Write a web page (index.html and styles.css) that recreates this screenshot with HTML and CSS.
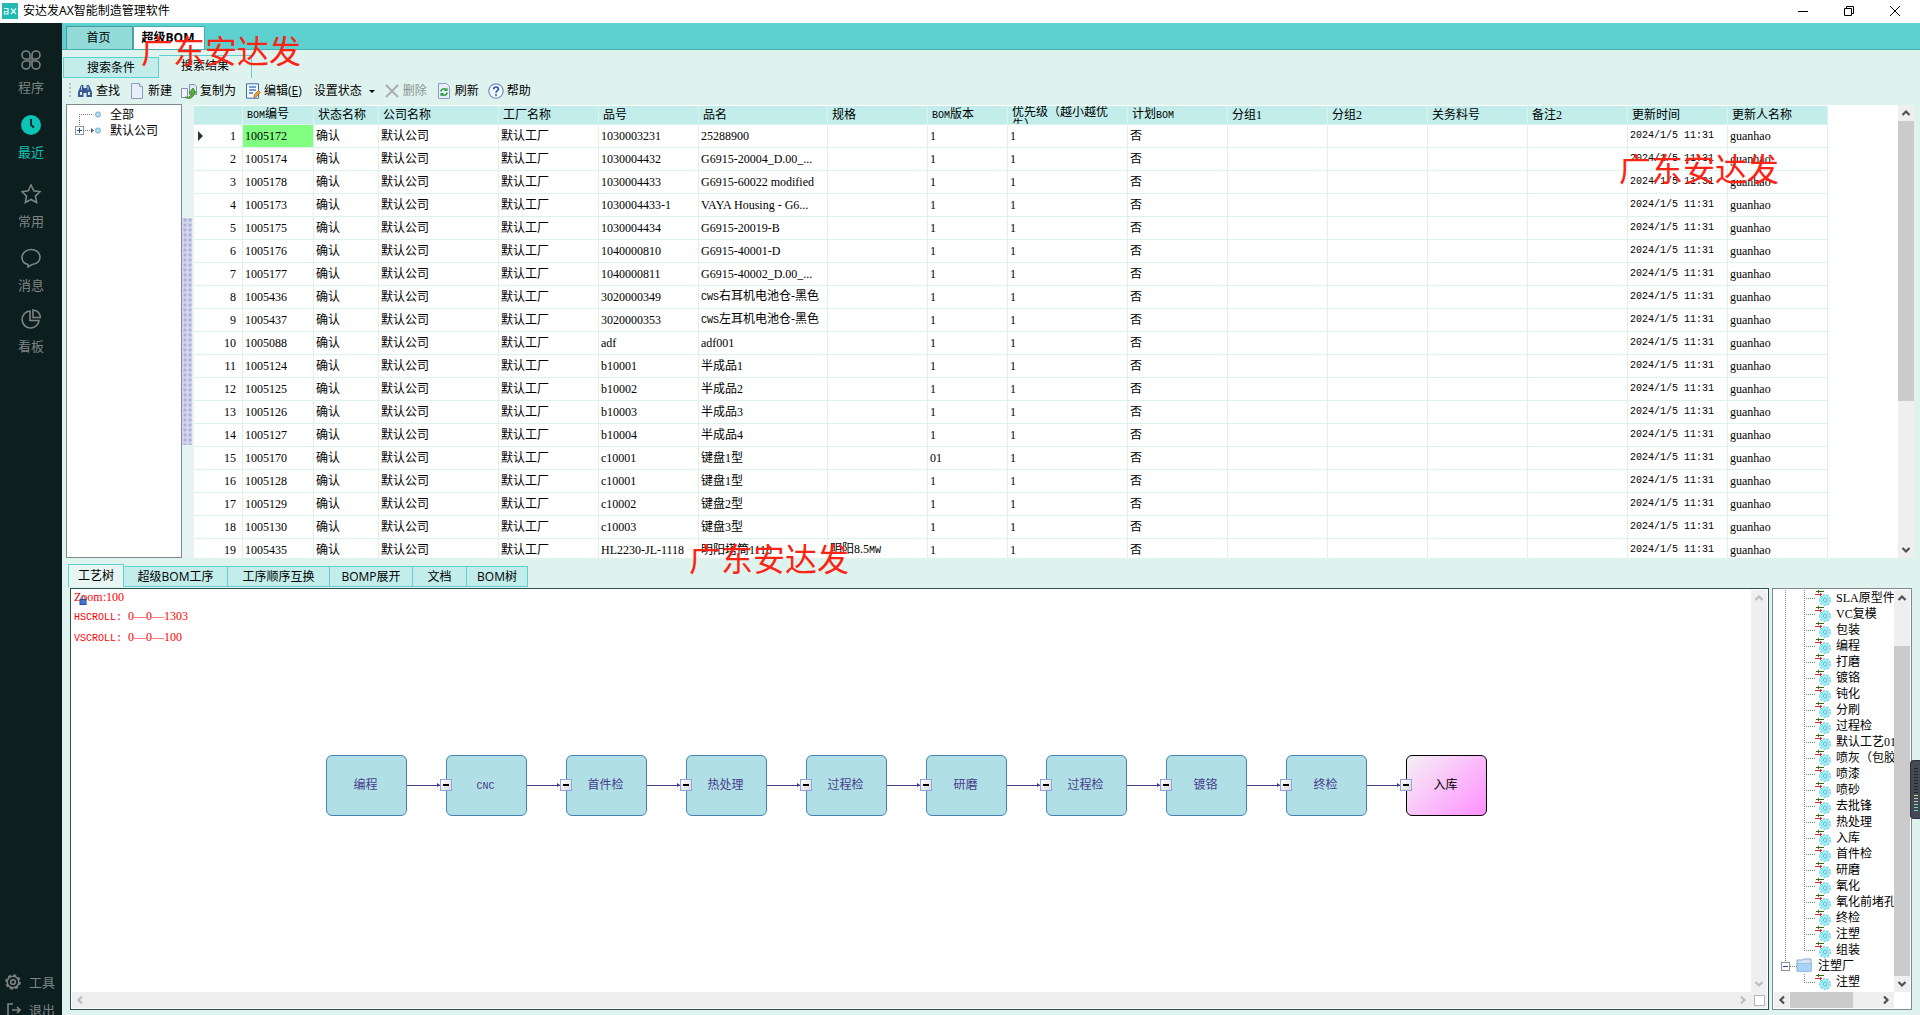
FILE: index.html
```html
<!DOCTYPE html>
<html lang="zh-CN">
<head>
<meta charset="utf-8">
<title>安达发AX智能制造管理软件</title>
<link rel="stylesheet" href="styles.css">
</head>
<body>
<svg width="0" height="0" class="defs" aria-hidden="true">
  <symbol id="up" viewBox="0 0 16 16"><path d="M4.500 10 8 6.500 11.500 10" fill="none" stroke="currentColor" stroke-width="2.200"/></symbol>
  <symbol id="down" viewBox="0 0 16 16"><path d="M4.500 6 8 9.500 11.500 6" fill="none" stroke="currentColor" stroke-width="2.200"/></symbol>
  <symbol id="left" viewBox="0 0 16 16"><path d="M10 4.500 6.500 8 10 11.500" fill="none" stroke="currentColor" stroke-width="2.200"/></symbol>
  <symbol id="right" viewBox="0 0 16 16"><path d="M6 4.500 9.500 8 6 11.500" fill="none" stroke="currentColor" stroke-width="2.200"/></symbol>
  <symbol id="gear" viewBox="0 0 16 16">
    <circle cx="10" cy="10" r="5.200" fill="none" stroke="#86c6ea" stroke-width="1.600" stroke-dasharray="2.400 1.200"/>
    <circle cx="10" cy="10" r="4.600" fill="#86f0f5"/>
    <circle cx="10" cy="10" r="1.500" fill="#fff" stroke="#7aa8c8"/>
    <path d="M1 1.500h8M3.500 0v3" stroke="#2f6b12"/>
    <path d="M0 4.500h7M5.500 3v3" stroke="#d82c2c"/>
  </symbol>
</svg>

<header class="titlebar">
  <svg class="logo" viewBox="0 0 16 16"><rect width="16" height="16" fill="#25b9b3"/><path d="M2 5.500h4V11H2.500V8.500H6M9 5.500l5 5.500M14 5.500 9 11" fill="none" stroke="#dff" stroke-width="1.200"/></svg>
  <h1>安达发AX智能制造管理软件</h1>
  <div class="winbtns">
    <button aria-label="最小化"><svg viewBox="0 0 12 12"><path d="M1 6.500h10" stroke="#000"/></svg></button>
    <button aria-label="还原"><svg viewBox="0 0 12 12"><path d="M1.500 3.500h7v7h-7zM3.500 3.500v-2h7v7h-2" fill="none" stroke="#000"/></svg></button>
    <button aria-label="关闭"><svg viewBox="0 0 12 12"><path d="m1 1 10 10M11 1 1 11" stroke="#000"/></svg></button>
  </div>
</header>

<div class="app">
  <nav class="side">
    <div class="side-main">
      <a href="#"><svg viewBox="0 0 20 20"><path d="M9 9H5a4 4 0 1 1 4-4zM11 9V5a4 4 0 1 1 4 4zM9 11v4a4 4 0 1 1-4-4zM11 11h4a4 4 0 1 1-4 4z"/></svg>程序</a>
      <a href="#" class="on"><svg viewBox="0 0 20 20"><circle cx="10" cy="10" r="10" fill="#0bc4b6" stroke="none"/><path d="M10 4v6l3 2.500" stroke="#0d1e1e" stroke-width="1.800"/></svg>最近</a>
      <a href="#"><svg viewBox="0 0 20 20"><path d="m10 1 2.800 5.800 6.200.9-4.500 4.400 1.100 6.400L10 15.500l-5.600 3 1.100-6.400L1 7.700l6.200-.9z"/></svg>常用</a>
      <a href="#"><svg viewBox="0 0 20 20"><path d="M7 16.500C3 15.500 1 12.500 1 9.500 1 5 5 1.500 10 1.500s9 3.300 9 7.500c0 5-4.500 7-8 7.500L7 19z"/></svg>消息</a>
      <a href="#"><svg viewBox="0 0 20 20"><path d="M9 2a8.500 8.500 0 1 0 9 9.500H9zM12 1v7.500h7.500C19 4 16 1.500 12 1z"/></svg>看板</a>
    </div>
    <div class="side-foot">
      <a href="#"><svg viewBox="0 0 16 16"><circle cx="8" cy="8" r="5.800"/><circle cx="8" cy="8" r="7" stroke-width="1.500" stroke-dasharray="3 2.500"/><circle cx="8" cy="8" r="2.300"/></svg>工具</a>
      <a href="#"><svg viewBox="0 0 16 16"><path d="M8 2H3v12h5M7 8h8M12 5l3 3-3 3"/></svg>退出</a>
    </div>
  </nav>

  <main>
    <div class="pagetabs"><button>首页</button><button class="on">超级BOM</button></div>
    <div class="subtabs"><button>搜索条件</button><button class="on">搜索结果</button></div>

    <div class="toolbar">
      <i class="grip"></i>
      <button><svg viewBox="0 0 16 16"><path d="M4 2h2.500v3h3V2H12l3 7v5H9.500v-4h-3v4H1V9z" fill="#3b5b95"/><path d="M3 9h2v3H3zM11 9h2v3h-2z" fill="#dfe9f7"/><path d="M4.500 3v4M11 3v4" stroke="#a8bde0"/></svg>查找</button>
      <button><svg viewBox="0 0 16 16"><path d="M2.500.5h8l3 3v12h-11z" fill="#e8effb" stroke="#8b9cc4"/><path d="M10.500.5v3h3" fill="#fff" stroke="#8b9cc4"/></svg>新建</button>
      <button><svg viewBox="0 0 16 16"><path d="M.5 5.500h6v9h-6z" fill="#f1f4fc" stroke="#8590b8"/><path d="M8.500 1.500h5l2 2v8h-7z" fill="#e3e8f8" stroke="#8590b8"/><path d="M4 14c4 1 6-1 6.500-4H8l4-5 3 5h-2c0 5-5 7-9 4z" fill="#4fb52c" stroke="#2c7a18" stroke-width=".7"/></svg>复制为</button>
      <button><svg viewBox="0 0 16 16"><path d="M1.500.8h12v14.400h-12z" fill="#f4f8ff" stroke="#3f69a8"/><path d="M4 4h7M4 7h7M4 10h4" stroke="#4a7cc4" stroke-width="1.400"/><path d="m9 15 .5-3.500 4-4 2 2-4 4z" fill="#f09b3c" stroke="#a35a18" stroke-width=".7"/></svg><span>编辑(<u>E</u>)</span></button>
      <button class="menu">设置状态<i class="caret"></i></button>
      <button class="off" disabled><svg viewBox="0 0 16 16"><path d="m2 2 12 12M14 2 2 14" stroke="#a9adad" stroke-width="2"/></svg>删除</button>
      <button><svg viewBox="0 0 16 16"><path d="M2.500.5h8l3 3v12h-11z" fill="#e8effb" stroke="#8b9cc4"/><path d="M5 8.500c0-3 4-3.500 5.500-1.500M11 9.500c0 3-4 3.500-5.500 1.500" fill="none" stroke="#1f9a35" stroke-width="1.500"/><path d="M11.500 4.500v3.500H8zM4.500 13.500V10H8z" fill="#1f9a35"/></svg>刷新</button>
      <button><svg viewBox="0 0 16 16"><circle cx="8" cy="8" r="7.200" fill="#f3f8ff" stroke="#6f8fc6" stroke-width="1.200"/><path d="M5.700 6.300c0-3 4.700-3 4.700-.2C10.400 8 8 7.800 8 9.800M8 11v1.800" fill="none" stroke="#2d55a8" stroke-width="1.700"/></svg>帮助</button>
    </div>

    <section class="upper">
      <div class="orgtree">
        <svg viewBox="0 0 36 40"><path d="M8.500 20V9.500H21M14 25.500h6" fill="none" stroke="#777" stroke-dasharray="1 1"/><rect x="4.500" y="21.500" width="8" height="8" fill="#fff" stroke="#8a93a5"/><path d="M6 25.500h5M8.500 23v5" stroke="#2b4b9b"/><path d="m20 23 3 2.500-3 2.500z" fill="#4a4f8f"/><circle cx="27" cy="9.500" r="2.600" fill="#a9dcf0" stroke="#7fb0d0"/><circle cx="27" cy="25.500" r="2.600" fill="#a9dcf0" stroke="#7fb0d0"/></svg>
        <ul><li>全部</li><li>默认公司</li></ul>
      </div>
      <div class="splitter"><i></i></div>
      <div class="gridwrap">
        <table>
          <colgroup><col class="w49"><col class="w71"><col class="w65"><col class="w120"><col class="w100"><col class="w100"><col class="w129"><col class="w100"><col class="w80"><col class="w120"><col class="w100"><col class="w100"><col class="w100"><col class="w100"><col class="w100"><col class="w100"><col class="w100"></colgroup>
          <thead><tr><th></th><th><span class="en">BOM</span>编号</th><th>状态名称</th><th>公司名称</th><th>工厂名称</th><th>品号</th><th>品名</th><th>规格</th><th><span class="en">BOM</span>版本</th><th><div class="wrap">优先级（越小越优<br>先）</div></th><th>计划<span class="en">BOM</span></th><th>分组1</th><th>分组2</th><th>关务料号</th><th>备注2</th><th>更新时间</th><th>更新人名称</th></tr></thead>
          <tbody>
            <tr><th scope="row"><i class="cur"></i>1</th><td class="hit">1005172</td><td>确认</td><td>默认公司</td><td>默认工厂</td><td>1030003231</td><td>25288900</td><td></td><td>1</td><td>1</td><td>否</td><td></td><td></td><td></td><td></td><td class="en">2024/1/5 11:31</td><td>guanhao</td></tr>
            <tr><th scope="row">2</th><td>1005174</td><td>确认</td><td>默认公司</td><td>默认工厂</td><td>1030004432</td><td>G6915-20004_D.00_...</td><td></td><td>1</td><td>1</td><td>否</td><td></td><td></td><td></td><td></td><td class="en">2024/1/5 11:31</td><td>guanhao</td></tr>
            <tr><th scope="row">3</th><td>1005178</td><td>确认</td><td>默认公司</td><td>默认工厂</td><td>1030004433</td><td>G6915-60022 modified</td><td></td><td>1</td><td>1</td><td>否</td><td></td><td></td><td></td><td></td><td class="en">2024/1/5 11:31</td><td>guanhao</td></tr>
            <tr><th scope="row">4</th><td>1005173</td><td>确认</td><td>默认公司</td><td>默认工厂</td><td>1030004433-1</td><td>VAYA Housing - G6...</td><td></td><td>1</td><td>1</td><td>否</td><td></td><td></td><td></td><td></td><td class="en">2024/1/5 11:31</td><td>guanhao</td></tr>
            <tr><th scope="row">5</th><td>1005175</td><td>确认</td><td>默认公司</td><td>默认工厂</td><td>1030004434</td><td>G6915-20019-B</td><td></td><td>1</td><td>1</td><td>否</td><td></td><td></td><td></td><td></td><td class="en">2024/1/5 11:31</td><td>guanhao</td></tr>
            <tr><th scope="row">6</th><td>1005176</td><td>确认</td><td>默认公司</td><td>默认工厂</td><td>1040000810</td><td>G6915-40001-D</td><td></td><td>1</td><td>1</td><td>否</td><td></td><td></td><td></td><td></td><td class="en">2024/1/5 11:31</td><td>guanhao</td></tr>
            <tr><th scope="row">7</th><td>1005177</td><td>确认</td><td>默认公司</td><td>默认工厂</td><td>1040000811</td><td>G6915-40002_D.00_...</td><td></td><td>1</td><td>1</td><td>否</td><td></td><td></td><td></td><td></td><td class="en">2024/1/5 11:31</td><td>guanhao</td></tr>
            <tr><th scope="row">8</th><td>1005436</td><td>确认</td><td>默认公司</td><td>默认工厂</td><td>3020000349</td><td><span class="en">CWS</span>右耳机电池仓-黑色</td><td></td><td>1</td><td>1</td><td>否</td><td></td><td></td><td></td><td></td><td class="en">2024/1/5 11:31</td><td>guanhao</td></tr>
            <tr><th scope="row">9</th><td>1005437</td><td>确认</td><td>默认公司</td><td>默认工厂</td><td>3020000353</td><td><span class="en">CWS</span>左耳机电池仓-黑色</td><td></td><td>1</td><td>1</td><td>否</td><td></td><td></td><td></td><td></td><td class="en">2024/1/5 11:31</td><td>guanhao</td></tr>
            <tr><th scope="row">10</th><td>1005088</td><td>确认</td><td>默认公司</td><td>默认工厂</td><td>adf</td><td>adf001</td><td></td><td>1</td><td>1</td><td>否</td><td></td><td></td><td></td><td></td><td class="en">2024/1/5 11:31</td><td>guanhao</td></tr>
            <tr><th scope="row">11</th><td>1005124</td><td>确认</td><td>默认公司</td><td>默认工厂</td><td>b10001</td><td>半成品1</td><td></td><td>1</td><td>1</td><td>否</td><td></td><td></td><td></td><td></td><td class="en">2024/1/5 11:31</td><td>guanhao</td></tr>
            <tr><th scope="row">12</th><td>1005125</td><td>确认</td><td>默认公司</td><td>默认工厂</td><td>b10002</td><td>半成品2</td><td></td><td>1</td><td>1</td><td>否</td><td></td><td></td><td></td><td></td><td class="en">2024/1/5 11:31</td><td>guanhao</td></tr>
            <tr><th scope="row">13</th><td>1005126</td><td>确认</td><td>默认公司</td><td>默认工厂</td><td>b10003</td><td>半成品3</td><td></td><td>1</td><td>1</td><td>否</td><td></td><td></td><td></td><td></td><td class="en">2024/1/5 11:31</td><td>guanhao</td></tr>
            <tr><th scope="row">14</th><td>1005127</td><td>确认</td><td>默认公司</td><td>默认工厂</td><td>b10004</td><td>半成品4</td><td></td><td>1</td><td>1</td><td>否</td><td></td><td></td><td></td><td></td><td class="en">2024/1/5 11:31</td><td>guanhao</td></tr>
            <tr><th scope="row">15</th><td>1005170</td><td>确认</td><td>默认公司</td><td>默认工厂</td><td>c10001</td><td>键盘1型</td><td></td><td>01</td><td>1</td><td>否</td><td></td><td></td><td></td><td></td><td class="en">2024/1/5 11:31</td><td>guanhao</td></tr>
            <tr><th scope="row">16</th><td>1005128</td><td>确认</td><td>默认公司</td><td>默认工厂</td><td>c10001</td><td>键盘1型</td><td></td><td>1</td><td>1</td><td>否</td><td></td><td></td><td></td><td></td><td class="en">2024/1/5 11:31</td><td>guanhao</td></tr>
            <tr><th scope="row">17</th><td>1005129</td><td>确认</td><td>默认公司</td><td>默认工厂</td><td>c10002</td><td>键盘2型</td><td></td><td>1</td><td>1</td><td>否</td><td></td><td></td><td></td><td></td><td class="en">2024/1/5 11:31</td><td>guanhao</td></tr>
            <tr><th scope="row">18</th><td>1005130</td><td>确认</td><td>默认公司</td><td>默认工厂</td><td>c10003</td><td>键盘3型</td><td></td><td>1</td><td>1</td><td>否</td><td></td><td></td><td></td><td></td><td class="en">2024/1/5 11:31</td><td>guanhao</td></tr>
            <tr><th scope="row">19</th><td>1005435</td><td>确认</td><td>默认公司</td><td>默认工厂</td><td>HL2230-JL-1118</td><td>明阳塔筒1118</td><td>明阳8.5<span class="en">MW</span></td><td>1</td><td>1</td><td>否</td><td></td><td></td><td></td><td></td><td class="en">2024/1/5 11:31</td><td>guanhao</td></tr>
          </tbody>
        </table>
      </div>
      <div class="vbar grid-bar"><svg><use href="#up"/></svg><i></i><svg><use href="#down"/></svg></div>
    </section>

    <div class="lowtabs"><button class="on">工艺树</button><button class="t2">超级BOM工序</button><button class="t3">工序顺序互换</button><button class="t4">BOMP展开</button><button class="t5">文档</button><button class="t6">BOM树</button></div>

    <section class="lower">
      <div class="diagram">
        <div class="canvas">
          <div class="readout">
            <p>Zoom:100<svg class="lock" viewBox="0 0 8 10"><path d="M2 5V3a2 2 0 0 1 4 0v2" fill="none" stroke="#667"/><rect x="1" y="4.500" width="6" height="5" fill="#4a72d0" stroke="#2d4a9c"/></svg></p>
            <p><span class="en">HSCROLL: </span>0—0—1303</p>
            <p><span class="en">VSCROLL: </span>0—0—100</p>
          </div>
          <ol class="flow">
            <li>编程</li><li><button aria-label="折叠"></button><span class="en">CNC</span></li><li><button aria-label="折叠"></button>首件检</li><li><button aria-label="折叠"></button>热处理</li><li><button aria-label="折叠"></button>过程检</li><li><button aria-label="折叠"></button>研磨</li><li><button aria-label="折叠"></button>过程检</li><li><button aria-label="折叠"></button>镀铬</li><li><button aria-label="折叠"></button>终检</li><li class="end"><button aria-label="折叠"></button>入库</li>
          </ol>
        </div>
        <div class="vbar idle"><svg><use href="#up"/></svg><svg><use href="#down"/></svg></div>
        <div class="hbar idle"><svg><use href="#left"/></svg><svg><use href="#right"/></svg></div>
        <div class="corner"><i></i></div>
      </div>

      <div class="proctree">
        <ul>
          <li><svg><use href="#gear"/></svg>SLA原型件</li><li><svg><use href="#gear"/></svg>VC复模</li><li><svg><use href="#gear"/></svg>包装</li><li><svg><use href="#gear"/></svg>编程</li><li><svg><use href="#gear"/></svg>打磨</li><li><svg><use href="#gear"/></svg>镀铬</li><li><svg><use href="#gear"/></svg>钝化</li><li><svg><use href="#gear"/></svg>分刷</li><li><svg><use href="#gear"/></svg>过程检</li><li><svg><use href="#gear"/></svg>默认工艺01</li><li><svg><use href="#gear"/></svg>喷灰（包胶）</li><li><svg><use href="#gear"/></svg>喷漆</li><li><svg><use href="#gear"/></svg>喷砂</li><li><svg><use href="#gear"/></svg>去批锋</li><li><svg><use href="#gear"/></svg>热处理</li><li><svg><use href="#gear"/></svg>入库</li><li><svg><use href="#gear"/></svg>首件检</li><li><svg><use href="#gear"/></svg>研磨</li><li><svg><use href="#gear"/></svg>氧化</li><li><svg><use href="#gear"/></svg>氧化前堵孔</li><li><svg><use href="#gear"/></svg>终检</li><li><svg><use href="#gear"/></svg>注塑</li><li class="last"><svg><use href="#gear"/></svg>组装</li>
          <li class="folder"><svg viewBox="0 0 32 16"><path d="M4.500 0v4M9 8.500h7" stroke="#777" stroke-dasharray="1 1"/><rect x=".5" y="4.500" width="8" height="8" fill="#fff" stroke="#8a93a5"/><path d="M2 8.500h5" stroke="#2b4b9b"/><path d="M16 2h6l1-1h7v12H16z" fill="#d5e4f3" stroke="#8fa9c6"/><path d="M16 5.500h15l-1 8H16.500z" fill="#a6d3f7" stroke="#86b4dc" stroke-width=".7"/></svg>注塑厂</li>
          <li class="last only"><svg><use href="#gear"/></svg>注塑</li>
        </ul>
        <div class="vbar proc-bar"><svg><use href="#up"/></svg><i></i><svg><use href="#down"/></svg></div>
        <div class="hbar proc-hbar"><svg><use href="#left"/></svg><i></i><svg><use href="#right"/></svg></div>
      </div>
    </section>
  </main>
</div>

<div class="mark m1">广东安达发</div>
<div class="mark m2">广东安达发</div>
<div class="mark m3">广东安达发</div>
<div class="dock"><i></i></div>
</body>
</html>
```
FILE: styles.css
```css
* { box-sizing: border-box; }
body {
  margin: 0; height: 100vh; overflow: hidden; display: flex; flex-direction: column; position: relative;
  background: #fff; color: #000; font: 12px/16px "Liberation Serif", "Noto Sans CJK SC", sans-serif;
}
button { font: inherit; color: inherit; border: 0; padding: 0; margin: 0; background: none; }
ul, ol { list-style: none; margin: 0; padding: 0; }
p { margin: 0; }
i { display: block; }
.defs { position: absolute; }
.en { font-family: "Liberation Mono", monospace; font-size: 10px; }

.titlebar { display: flex; align-items: center; height: 23px; padding: 0 2px 2px; gap: 5px; font-family: "Noto Sans", "Noto Sans CJK SC", sans-serif; }
.titlebar h1 { margin: 0; font-size: 12px; font-weight: 400; flex: 1; }
.logo { width: 16px; height: 16px; }
.winbtns { display: flex; }
.winbtns button { width: 46px; height: 20px; display: grid; place-items: center; }
.winbtns svg { width: 12px; height: 12px; }

.app { flex: 1; min-height: 0; display: flex; }
.side { width: 62px; flex: none; background: #0d1e1e; display: flex; flex-direction: column; justify-content: space-between; overflow: hidden; font: 13px/16px "Noto Sans CJK SC", sans-serif; }
.side a { color: #7d8483; text-decoration: none; }
.side svg { fill: none; stroke: #7d8483; stroke-width: 1.6; }
.side-main { display: grid; grid-template-rows: 65px 69px 64px 61px 60px; padding-top: 27px; }
.side-main a { display: flex; flex-direction: column; align-items: center; gap: 9px; }
.side-main svg { width: 20px; height: 20px; }
.side-main a.on { color: #0bc4b6; }
.side-foot { height: 41px; display: flex; flex-direction: column; gap: 12px; flex: none; }
.side-foot a { display: flex; gap: 8px; padding-left: 5px; flex: none; }
.side-foot svg { width: 16px; height: 16px; }

main { flex: 1; min-width: 0; display: flex; flex-direction: column; background: #dff3ee; padding-bottom: 5px; }
.pagetabs, .subtabs, .toolbar, .lowtabs { flex: none; display: flex; font-family: "Open Sans", "Noto Sans CJK SC", sans-serif; }
.pagetabs { height: 27px; padding: 3px 4px 0; background: #5cd1cf; border-bottom: 1px solid #45aeae; }
.pagetabs button { width: 67px; background: #93dbd9; border: 1px solid #4a9c9c; border-bottom: 0; padding-right: 2px; }
.pagetabs .on { width: 72px; background: #fff; font-weight: 700; border-color: #45aeae; }
.subtabs { height: 28px; align-items: flex-end; padding-left: 1px; }
.subtabs button { width: 96px; height: 21px; background: #c2edeb; border: 1px solid #5cd1cf; }
.subtabs .on { width: 93px; height: 23px; background: #dff3ee; border-bottom: 0; border-left: 0; padding-bottom: 2px; }

.toolbar { height: 26px; align-items: center; gap: 9px; padding-left: 7px; }
.toolbar button { display: flex; align-items: center; gap: 3px; }
.toolbar svg { width: 16px; height: 16px; }
.grip { width: 2px; height: 16px; margin-right: -3px; background: repeating-linear-gradient(#b3bfbc 0 2px, transparent 2px 4px); }
.toolbar .menu { gap: 7px; padding: 0 0 0 3px; }
.caret { border: 3px solid transparent; border-top-color: #000; border-bottom: 0; }
.toolbar .off { color: #8d9391; }

.upper { flex: 454 1 0; min-height: 0; display: flex; padding: 0 6px 0 4px; }
.orgtree { width: 116px; flex: none; display: flex; background: #fff; border: 1px solid #7d8a8f; }
.orgtree svg { width: 36px; height: 40px; margin-left: 4px; }
.orgtree ul { padding: 2px 0 0 3px; }
.splitter { width: 12px; flex: none; display: flex; align-items: center; background: #e6f3f0; }
.splitter i { width: 10px; height: 50%; background: radial-gradient(circle at 2px 2px, #b0b0cd 0 1px, transparent 2px) 1px 0 / 5px 5px #d3d3f3; }
.gridwrap { flex: 1; min-width: 0; overflow: hidden; background: #fff; margin-top: 1px; padding-top: 1px; }

table { width: 1634px; table-layout: fixed; border-collapse: separate; border-spacing: 0; }
.w49 { width: 49px; } .w65 { width: 65px; } .w71 { width: 71px; } .w80 { width: 80px; }
.w100 { width: 100px; } .w120 { width: 120px; } .w129 { width: 129px; }
th, td { text-align: left; font-weight: 400; white-space: nowrap; overflow: hidden; line-height: 16px; border: solid #dcf2ec; border-width: 0 1px 1px 0; }
thead th { height: 19px; padding: 0 0 0 4px; background: #c2edeb; }
.wrap { height: 18px; line-height: 13px; overflow: hidden; }
tbody th, tbody td { height: 23px; padding: 0 2px; }
tbody th { text-align: right; padding-right: 6px; }
.hit { background: #80ff80; }
.cur { float: left; margin: 3px 0 0 2px; border: 5px solid transparent; border-left-color: #333; border-right: 0; }

.vbar, .hbar { background: #efefef; color: #505050; display: flex; justify-content: space-between; }
.vbar { width: 16px; flex-direction: column; }
.vbar svg, .hbar svg { width: 16px; height: 16px; flex: none; }
.vbar i, .hbar i { background: #cbcbcb; }
.idle { color: #bdbdbd; }
.grid-bar { flex: none; margin-top: 1px; }
.grid-bar i { height: 280px; margin-bottom: auto; }

.lowtabs { height: 30px; align-items: flex-end; padding: 0 0 1px 6px; }
.lowtabs button { height: 21px; background: #c2edeb; border: 1px solid #5cd1cf; border-left: 0; }
.lowtabs .on { width: 56px; height: 23px; background: #e8f6f3; border-left: 1px solid #5cd1cf; border-bottom: 0; }
.t2 { width: 104px; } .t3 { width: 102px; } .t4 { width: 83px; } .t5 { width: 54px; } .t6 { width: 61px; }

.lower { flex: 422 1 0; min-height: 0; display: flex; gap: 3px; padding: 0 8px; }
.diagram { flex: 1; min-width: 0; display: grid; grid-template: minmax(0, 1fr) 16px / minmax(0, 1fr) 16px; background: #fff; border: 1px solid #2c4f4f; padding: 1px; }
.canvas { overflow: hidden; }
.readout { color: #f00; padding-left: 2px; display: flex; flex-direction: column; gap: 5px; height: 55px; line-height: 14px; }
.readout p { position: relative; }
.lock { position: absolute; left: 5px; top: 5px; width: 8px; height: 10px; }
.flow { display: flex; gap: 39px; padding: 110px 0 0 254px; }
.flow li { position: relative; width: 81px; height: 61px; flex: none; text-align: center; line-height: 58px; padding-right: 2px; color: #483d8b; background: #b0e0e6; border: 1px solid #4682b4; border-radius: 6px; }
.flow li + li::before { content: ""; position: absolute; left: -40px; top: 29px; width: 34px; height: 1px; background: #483d8b; }
.flow button { position: absolute; left: -7px; top: 23px; width: 12px; height: 12px; background: linear-gradient(135deg, #fff, #d8d8d8); border: 1px solid #8fa4e0; display: grid; place-items: center; }
.flow button::before { content: ""; width: 6px; height: 2px; background: #000; }
.flow button::after { content: ""; position: absolute; left: -4px; top: 3px; border: 2px solid transparent; border-left: 3px solid #483d8b; border-right: 0; }
.flow .end { color: #000; border-color: #000; background: linear-gradient(135deg, #f5f0f5, #ff90ff); }
.corner { background: #efefef; display: grid; place-items: center; }
.corner i { width: 11px; height: 11px; background: #fff; border: 1px solid #b5b5b5; }

.proctree { width: 140px; flex: none; display: grid; grid-template: minmax(0, 1fr) 16px / minmax(0, 1fr) 16px; background: #fff; border: 1px solid #7d8a8f; padding: 1px; }
.proctree ul { overflow: hidden; padding-left: 11px; }
.proctree li { display: flex; gap: 5px; height: 16px; line-height: 17px; padding-left: 30px; white-space: nowrap; background:
  repeating-linear-gradient(#888 0 1px, transparent 1px 2px) 0 0 / 1px 16px no-repeat,
  repeating-linear-gradient(#888 0 1px, transparent 1px 2px) 19px 0 / 1px 16px no-repeat,
  repeating-linear-gradient(90deg, #888 0 1px, transparent 1px 2px) 19px 8px / 11px 1px no-repeat; }
.proctree li svg { width: 16px; height: 16px; flex: none; }
.proctree .last { background-size: 1px 16px, 1px 8px, 11px 1px; }
.proctree .only { background-size: 0 0, 1px 8px, 11px 1px; }
.proctree .folder { background: none; padding: 0; margin-left: -4px; }
.proctree .folder svg { width: 32px; }
.proc-bar i { height: 82%; margin-top: auto; }
.proc-hbar i { width: 63px; margin-right: auto; }

.mark { position: absolute; font: 32px/40px "Noto Sans CJK SC", sans-serif; color: #fb2414; white-space: nowrap; }
.m1 { left: 141px; top: 29px; }
.m2 { left: 1619px; top: 147px; }
.m3 { left: 689px; top: 537px; }
.dock { position: absolute; right: 0; top: 760px; width: 10px; height: 59px; background: #454956; border: 1px solid #2f323c; border-right: 0; border-radius: 4px 0 0 4px; padding: 7px 2px 6px 3px; }
.dock i { height: 100%; background: repeating-linear-gradient(transparent 0 1px, #454956 1px 3px), linear-gradient(#23252d 56%, #c5dc8a 58%, #5fd8cc); }
```
